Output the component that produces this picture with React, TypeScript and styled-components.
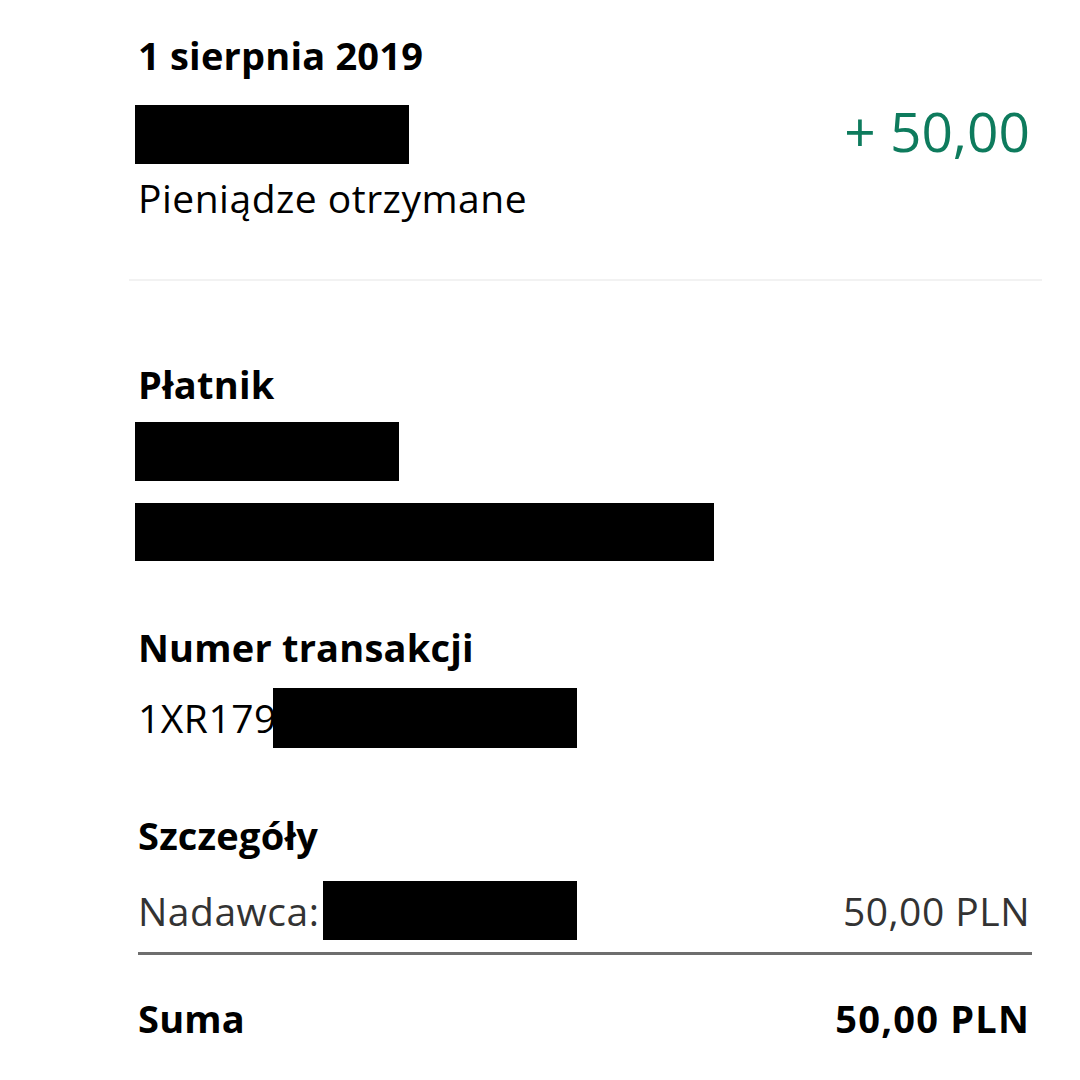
import React from "react";
import styled, { createGlobalStyle } from "styled-components";

const Global = createGlobalStyle`
  html, body { margin: 0; padding: 0; background: #ffffff; }
  body { font-family: "Open Sans", "Noto Sans", sans-serif; color: #000; }
`;

const Page = styled.div`
  width: 1080px;
  height: 1080px;
  box-sizing: border-box;
  padding: 31px 50px 0 138px;
  display: flex;
  flex-direction: column;
`;

const Heading = styled.div<{ $mt?: number }>`
  font-size: 38px;
  font-weight: 700;
  line-height: 48px;
  letter-spacing: 0.2px;
  margin-top: ${(p) => p.$mt ?? 0}px;
`;

const Body = styled.div<{ $color?: string; $mt?: number }>`
  font-size: 39px;
  font-weight: 400;
  line-height: 48px;
  color: ${(p) => p.$color ?? "#000"};
  letter-spacing: 0.5px;
  margin-top: ${(p) => p.$mt ?? 0}px;
`;

const Redact = styled.div<{ $w: number; $h?: number; $ml?: number }>`
  width: ${(p) => p.$w}px;
  height: ${(p) => p.$h ?? 59}px;
  margin-left: ${(p) => p.$ml ?? 0}px;
  background: #000;
  flex-shrink: 0;
`;

const TopRow = styled.div`
  display: flex;
  justify-content: space-between;
  align-items: flex-start;
  margin-top: 26px;
  margin-left: -3px;
`;

const Amount = styled.div`
  font-size: 55px;
  line-height: 60px;
  color: #0e7b5d;
  margin-top: -4px;
  letter-spacing: 0px;
`;

const Divider = styled.div`
  height: 2px;
  background: #f2f2f2;
  margin: 57px -12px 0 -9px;
`;

const Stack = styled.div<{ $gap?: number; $mt?: number }>`
  display: flex;
  flex-direction: column;
  gap: ${(p) => p.$gap ?? 0}px;
  margin-top: ${(p) => p.$mt ?? 0}px;
  margin-left: -3px;
`;

const Inline = styled.div<{ $mt?: number }>`
  display: flex;
  align-items: center;
  margin-top: ${(p) => p.$mt ?? 0}px;
`;

const DetailRow = styled.div<{ $mt?: number }>`
  display: flex;
  justify-content: space-between;
  align-items: center;
  margin-top: ${(p) => p.$mt ?? 0}px;
`;

const Rule = styled.div`
  height: 3px;
  background: #6e6e6e;
  margin-top: 12px;
  margin-right: -2px;
`;

const Total = styled(Heading)`
  letter-spacing: 1.2px;
`;

export default function App() {
  return (
    <>
      <Global />
      <Page>
        <Heading>1 sierpnia 2019</Heading>
        <TopRow>
          <Redact $w={274} />
          <Amount>+ 50,00</Amount>
        </TopRow>
        <Body $mt={10}>Pieniądze otrzymane</Body>
        <Divider />
        <Heading $mt={79}>Płatnik</Heading>
        <Stack $gap={22} $mt={14}>
          <Redact $w={264} />
          <Redact $w={579} $h={58} />
        </Stack>
        <Heading $mt={62}>Numer transakcji</Heading>
        <Inline $mt={17}>
          <Body>1XR179</Body>
          <Redact $w={304} $h={60} $ml={-4} />
        </Inline>
        <Heading $mt={63}>Szczegóły</Heading>
        <DetailRow $mt={22}>
          <Inline>
            <Body $color="#333">Nadawca:</Body>
            <Redact $w={254} $ml={4} />
          </Inline>
          <Body $color="#333">50,00 PLN</Body>
        </DetailRow>
        <Rule />
        <DetailRow $mt={39}>
          <Heading>Suma</Heading>
          <Total>50,00 PLN</Total>
        </DetailRow>
      </Page>
    </>
  );
}
